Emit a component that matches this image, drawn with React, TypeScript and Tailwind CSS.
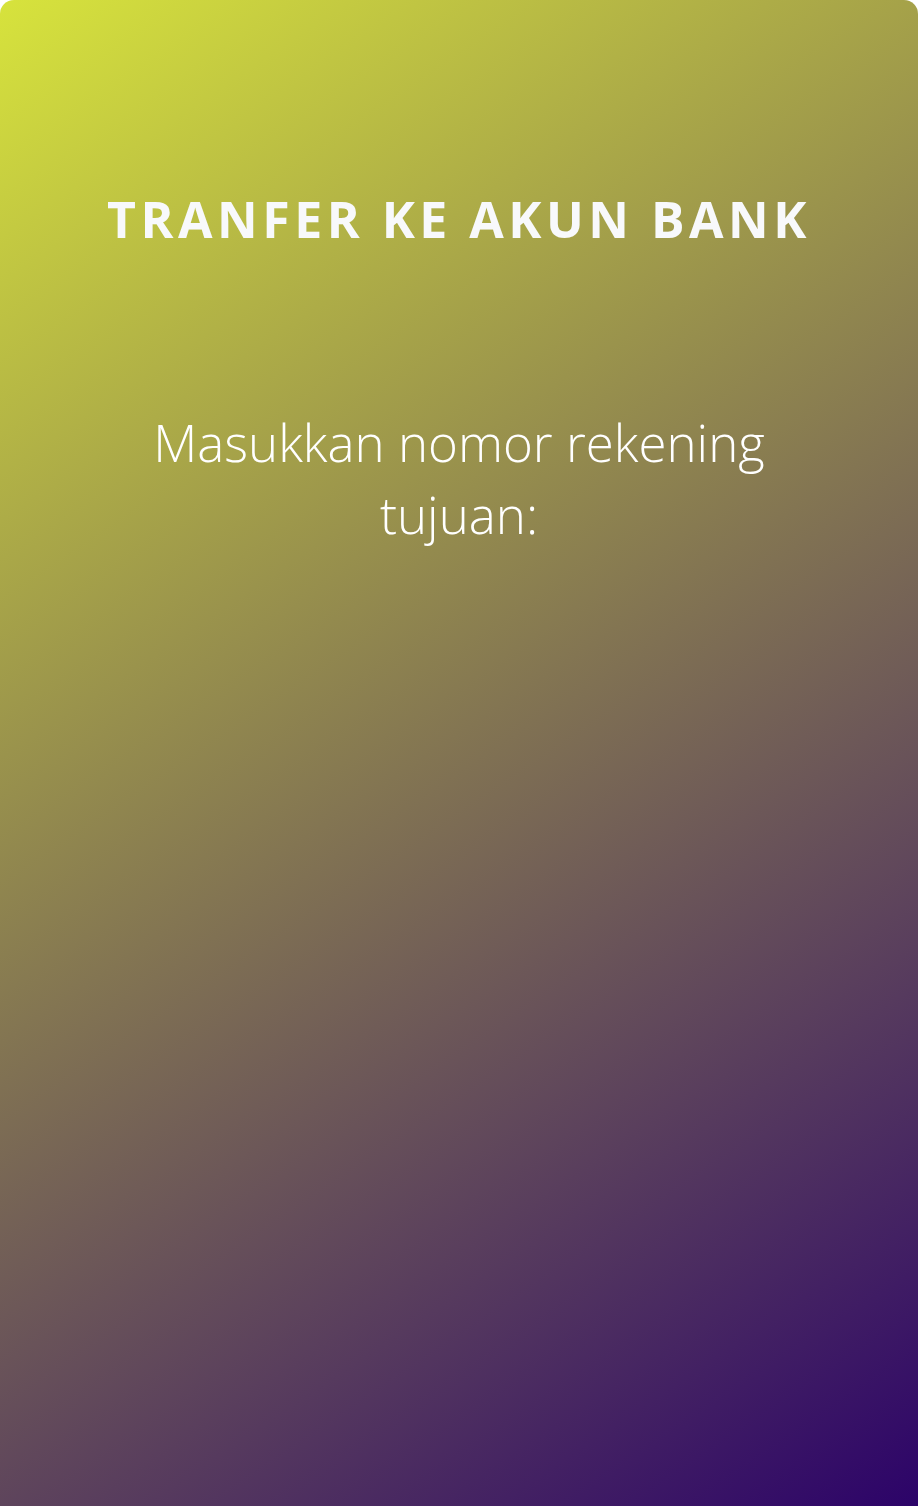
export default function App() {
  return (
    <div className="min-h-[1506px] w-full rounded-t-[14px] bg-[linear-gradient(146deg,#d7e33c,#2c0369)] font-['Open_Sans',sans-serif] text-white">
      <div className="flex flex-col items-center px-10 pt-[194px]">
        {/* header */}
        <h1 className="text-[50px] font-bold uppercase leading-none tracking-[0.09em] text-[#f8f9fb]">
          Tranfer ke akun bank
        </h1>

        {/* account number prompt */}
        <p className="mt-[162px] max-w-[680px] text-center text-[51px] font-light leading-[72px]">
          Masukkan nomor rekening tujuan:
        </p>
      </div>
    </div>
  );
}
